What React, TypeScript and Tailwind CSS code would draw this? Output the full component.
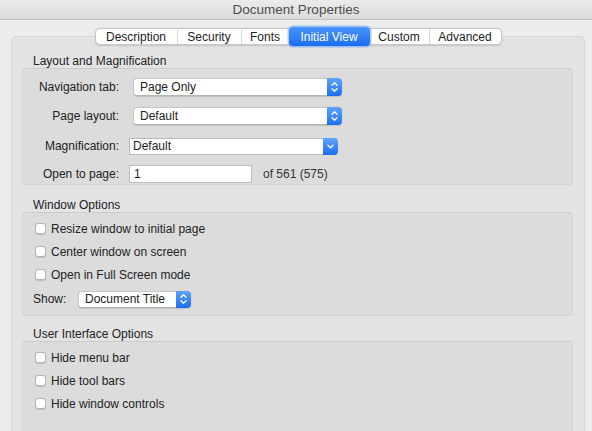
import type { ReactNode } from 'react'

const tabs = [
  { name: 'Description', w: 'w-[81px]' },
  { name: 'Security', w: 'w-[64px]' },
  { name: 'Fonts', w: 'w-[48px]' },
  { name: 'Initial View', w: 'w-[81px]', active: true },
  { name: 'Custom', w: 'w-[59px]' },
  { name: 'Advanced', w: 'w-[72px]' },
]

function Stepper() {
  return (
    <div className="w-[15px] self-stretch -my-px -mr-px rounded-r-[4px] bg-gradient-to-b from-[#5ea3fb] to-[#1c6df0] flex items-center justify-center">
      <svg width="15" height="18" viewBox="0 0 15 18" fill="none">
        <path d="M5 7.2 L7.5 4.8 L10 7.2" stroke="white" strokeWidth="1.3" strokeLinecap="round" strokeLinejoin="round" />
        <path d="M5 10.8 L7.5 13.2 L10 10.8" stroke="white" strokeWidth="1.3" strokeLinecap="round" strokeLinejoin="round" />
      </svg>
    </div>
  )
}

function Popup({ value, w }: { value: string; w: string }) {
  return (
    <div className={`${w} h-[18px] flex items-center bg-white rounded-[4px] border border-[#c8c8c8] border-b-[#b4b4b4] shadow-[0_0.5px_1px_rgba(0,0,0,0.12)]`}>
      <span className="flex-1 pl-[6px] leading-none text-[#222]">{value}</span>
      <Stepper />
    </div>
  )
}

function Combo({ value }: { value: string }) {
  return (
    <div className="w-[209px] h-[17px] flex">
      <div className="flex-1 bg-white border border-[#b8b8b8] border-r-0 flex items-center pl-[3px] text-[#222]">{value}</div>
      <div className="w-[15px] rounded-r-[4px] bg-gradient-to-b from-[#5ea3fb] to-[#1c6df0] flex items-center justify-center">
        <svg width="15" height="17" viewBox="0 0 15 17" fill="none">
          <path d="M5 7.3 L7.5 9.8 L10 7.3" stroke="white" strokeWidth="1.3" strokeLinecap="round" strokeLinejoin="round" />
        </svg>
      </div>
    </div>
  )
}

function Row({ label, children, gap }: { label: string; children: ReactNode; gap: string }) {
  return (
    <div className="flex items-center">
      <div className="w-[96px] text-right text-[#222]">{label}</div>
      <div className={`${gap} flex items-center`}>{children}</div>
    </div>
  )
}

function Check({ label }: { label: string }) {
  return (
    <label className="h-[23px] flex items-center pl-[12px]">
      <span className="w-[11px] h-[11px] rounded-[3px] bg-white border border-[#b5b5b5] shadow-[0_0.5px_1px_rgba(0,0,0,0.15)]" />
      <span className="ml-[5px] text-[#222]">{label}</span>
    </label>
  )
}

function Header({ children, mt }: { children: ReactNode; mt: string }) {
  return <div className={`${mt} h-[14px] leading-[14px] pl-[11px] text-[#222]`}>{children}</div>
}

function Group({ children, className }: { children: ReactNode; className: string }) {
  return (
    <div className={`bg-[#dcdcdc] border border-[#d4d4d4] border-t-[#cccccc] rounded-[4px] ${className}`}>
      {children}
    </div>
  )
}

export default function App() {
  return (
    <div className="w-[592px] h-[431px] overflow-hidden bg-[#ececec] text-[12px] font-['Liberation_Sans',Arial,sans-serif] flex flex-col">
      <div className="h-[20px] shrink-0 bg-gradient-to-b from-[#ebebeb] to-[#dcdcdc] border-b border-[#c4c4c4] flex items-center justify-center">
        <span className="text-[13.5px] text-[#4d4d4d] leading-none">Document Properties</span>
      </div>

      <div className="flex flex-col pl-[11px] pr-[7px]">
        <div className="relative z-10 mt-[8px] h-[17px] flex justify-center">
          <div className="flex h-[17px] bg-white rounded-[5px] border border-[#c9c9c9] shadow-[0_0.5px_1.5px_rgba(0,0,0,0.15)]">
            {tabs.map((t, i) =>
              t.active ? (
                <div
                  key={t.name}
                  className={`${t.w} -my-[2px] h-[19px] rounded-[4px] bg-gradient-to-b from-[#4994f9] to-[#1b6ef0] text-white flex items-center justify-center shadow-[0_0_0_1.5px_rgba(100,160,250,0.55)]`}
                >
                  {t.name}
                </div>
              ) : (
                <div
                  key={t.name}
                  className={`${t.w} flex items-center justify-center text-[#222] ${i > 0 && !tabs[i - 1].active ? 'border-l border-[#d8d8d8]' : ''}`}
                >
                  {t.name}
                </div>
              ),
            )}
          </div>
        </div>

        <div className="-mt-[9px] h-[420px] bg-[#e3e3e3] border border-[#d6d6d6] rounded-[5px] pt-[17px] pl-[10px] pr-[11px]">
          <Header mt="mt-0">Layout and Magnification</Header>
          <Group className="h-[117px] pt-[9px] flex flex-col">
            <Row label="Navigation tab:" gap="ml-[14px]">
              <Popup value="Page Only" w="w-[209px]" />
            </Row>
            <div className="mt-[11px]">
              <Row label="Page layout:" gap="ml-[14px]">
                <Popup value="Default" w="w-[209px]" />
              </Row>
            </div>
            <div className="mt-[12px]">
              <Row label="Magnification:" gap="ml-[10px]">
                <Combo value="Default" />
              </Row>
            </div>
            <div className="mt-[10px]">
              <Row label="Open to page:" gap="ml-[10px]">
                <div className="w-[123px] h-[18px] bg-white border border-[#bdbdbd] flex items-center pl-[4px] text-[#222]">1</div>
                <span className="ml-[11px] text-[#333]">of 561 (575)</span>
              </Row>
            </div>
          </Group>

          <Header mt="mt-[13px]">Window Options</Header>
          <Group className="h-[104px] pt-[4px] flex flex-col">
            <Check label="Resize window to initial page" />
            <Check label="Center window on screen" />
            <Check label="Open in Full Screen mode" />
            <div className="mt-[4px] flex items-center pl-[10px]">
              <span className="w-[45px] text-[#222]">Show:</span>
              <div className="h-[17px] flex">
                <div className="w-[113px] h-[17px] flex items-center bg-white rounded-[4px] border border-[#c8c8c8] border-b-[#b4b4b4] shadow-[0_0.5px_1px_rgba(0,0,0,0.12)]">
                  <span className="flex-1 pl-[6px] leading-none text-[#222]">Document Title</span>
                  <Stepper />
                </div>
              </div>
            </div>
          </Group>

          <Header mt="mt-[11px]">User Interface Options</Header>
          <Group className="h-[120px] pt-[4px] flex flex-col">
            <Check label="Hide menu bar" />
            <Check label="Hide tool bars" />
            <Check label="Hide window controls" />
          </Group>
        </div>
      </div>
    </div>
  )
}
